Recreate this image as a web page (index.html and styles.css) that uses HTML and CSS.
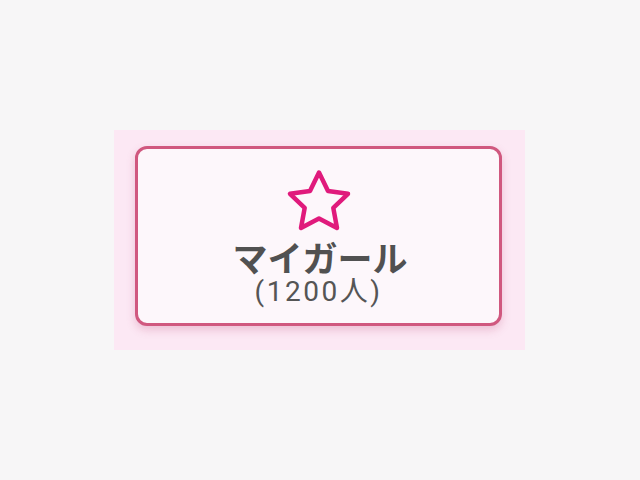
FILE: index.html
```html
<!DOCTYPE html>
<html lang="ja">
<head>
<meta charset="utf-8">
<link rel="stylesheet" href="styles.css">
</head>
<body>
<div class="page">
  <div class="panel">
    <div class="card">
      <svg class="star" width="74" height="66" viewBox="0 0 74 66">
        <path d="M37 3.5 L46 22 L66 24.8 L51.3 38.8 L55 59 L37 49.5 L19 59 L22.7 38.8 L8 24.8 L28 22 Z" fill="none" stroke="#e01a7c" stroke-width="4.5" stroke-linejoin="round"/>
      </svg>
      <div class="title">マイガール</div>
      <div class="count">(1200人)</div>
    </div>
  </div>
</div>
</body>
</html>
```
FILE: styles.css
```css
html, body {
  margin: 0;
  padding: 0;
  background: #f7f6f7;
  width: 640px;
  height: 480px;
  overflow: hidden;
}
.page {
  padding: 130px 0 0 114px;
  display: flex;
}
.panel {
  width: 411px;
  height: 220px;
  box-sizing: border-box;
  padding: 16px 0 0 21px;
  background: #fce8f4;
}
.card {
  width: 367px;
  height: 180px;
  box-sizing: border-box;
  border: 3px solid #d0587f;
  border-radius: 12px;
  background: #fdf7fb;
  box-shadow: 0 4px 8px rgba(190, 70, 120, 0.25);
  display: flex;
  flex-direction: column;
  align-items: center;
  padding-top: 20px;
  font-family: "Noto Sans CJK JP", "Noto Sans", sans-serif;
  color: #515151;
}
.star {
  display: block;
}
.title {
  font-size: 35px;
  font-weight: 700;
  line-height: 36px;
  margin-top: 4px;
  padding-left: 3px;
}
.count {
  font-family: Roboto, "Noto Sans CJK JP", sans-serif;
  font-weight: 400;
  font-size: 28px;
  letter-spacing: 2.5px;
  line-height: 32px;
  margin-top: 1px;
  color: #555555;
}
```
